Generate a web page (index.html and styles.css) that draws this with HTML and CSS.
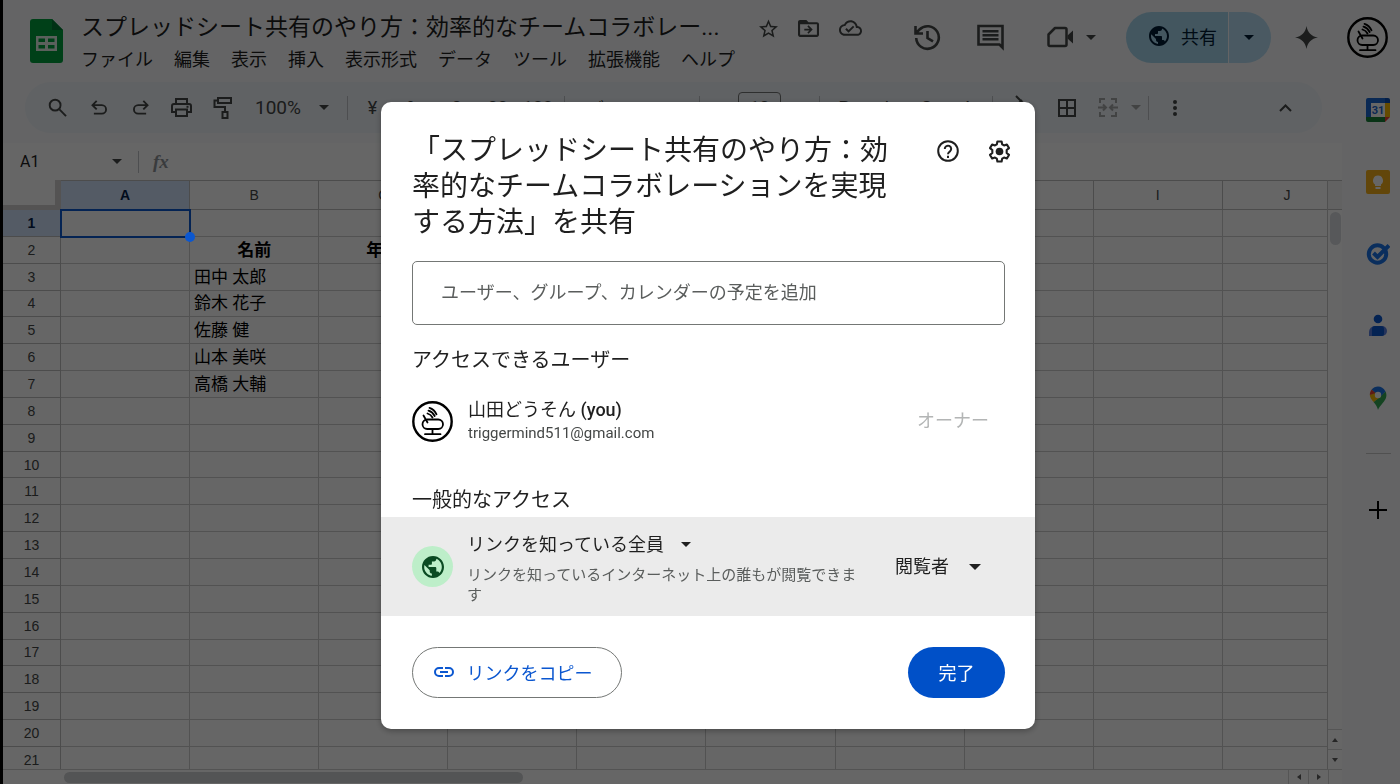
FILE: index.html
```html
<!DOCTYPE html>
<html lang="ja">
<head>
<meta charset="utf-8">
<title>スプレッドシート共有のやり方</title>
<link rel="stylesheet" href="styles.css">
</head>
<body>
<svg width="0" height="0" class="defs" aria-hidden="true">
  <symbol id="globe" viewBox="2 2 20 20"><path fill="currentColor" d="M12 2C6.48 2 2 6.48 2 12s4.48 10 10 10 10-4.480 10-10S17.520 2 12 2zm-1 17.930c-3.950-.490-7-3.850-7-7.930 0-.620.080-1.210.210-1.790L9 15v1c0 1.100.900 2 2 2v1.930zm6.900-2.540c-.260-.810-1-1.390-1.900-1.390h-1v-3c0-.550-.450-1-1-1H8v-2h2c.550 0 1-.450 1-1V7h2c1.100 0 2-.900 2-2v-.410c2.930 1.190 5 4.060 5 7.410 0 2.080-.800 3.970-2.100 5.390z"/></symbol>
  <symbol id="down" viewBox="0 0 10 5"><path fill="currentColor" d="M0 0h10L5 5z"/></symbol>
  <symbol id="mic" viewBox="0 0 41 41"><circle cx="20.500" cy="20.500" r="19.200" fill="#fff" stroke="#000" stroke-width="2.400"/><g fill="none" stroke="#000" stroke-width="1.800" stroke-linecap="round"><rect x="10.500" y="18.500" width="20.500" height="9.500" rx="4.750"/><path d="M20.500 28v5M13 33.200h15.500M11.500 14.500l4 7M15.500 12.500q3.500 1 5 4M17.500 6.800q4.800 1.500 7 6.500M16.500 9.600q4 1.200 6.200 5.400"/></g></symbol>
</svg>

<div class="app">
  <header class="top">
    <svg class="logo" viewBox="0 0 33 44"><path fill="#00a13d" d="M3 0h19l11 11v30a3 3 0 0 1-3 3H3a3 3 0 0 1-3-3V3a3 3 0 0 1 3-3z"/><path fill="#007a33" d="M22 0l11 11H22z"/><path fill="#e4f0e6" fill-rule="evenodd" d="M6 17h21v15H6zM8.500 19.500v3.500H15v-3.500zm9.500 0v3.500h6.500v-3.500zM8.500 26v3.500H15V26zM18 26v3.500h6.500V26z"/></svg>
    <div class="doc">
      <div class="doc-name">
        <h1>スプレッドシート共有のやり方：効率的なチームコラボレー...</h1>
        <button aria-label="スター"><svg width="19" height="19" viewBox="2 2 20 19"><path fill="currentColor" d="M22 9.240l-7.190-.620L12 2 9.190 8.630 2 9.240l5.460 4.730L5.820 21 12 17.270 18.180 21l-1.630-7.030L22 9.240zM12 15.400l-3.760 2.270 1-4.280-3.320-2.880 4.380-.380L12 6.100l1.710 4.040 4.380.380-3.320 2.880 1 4.280L12 15.400z"/></svg></button>
        <button aria-label="移動"><svg width="21" height="17" viewBox="2 4 20 16"><path fill="currentColor" d="M20 6h-8l-2-2H4C2.900 4 2 4.900 2 6v12c0 1.100.900 2 2 2h16c1.100 0 2-.900 2-2V8c0-1.100-.900-2-2-2zm0 12H4V8h16v10zm-8-1l4-4-4-4-1.100 1.100 2.100 2.100H8v1.600h5l-2.100 2.100z"/></svg></button>
        <button aria-label="保存済み"><svg width="23" height="16" viewBox="0 4 24 16"><path fill="currentColor" d="M19.350 10.040C18.670 6.590 15.640 4 12 4 9.110 4 6.600 5.640 5.350 8.040 2.340 8.360 0 10.910 0 14c0 3.310 2.690 6 6 6h13c2.760 0 5-2.240 5-5 0-2.640-2.050-4.780-4.650-4.960zM19 18H6c-2.210 0-4-1.790-4-4 0-2.050 1.530-3.760 3.560-3.970l1.070-.110.500-.950C8.080 7.140 9.940 6 12 6c2.620 0 4.880 1.860 5.390 4.430l.300 1.500 1.530.110c1.560.100 2.780 1.410 2.780 2.960 0 1.650-1.350 3-3 3zm-9-3.820l-2.090-2.090L6.500 13.500 10 17l6.010-6.010-1.410-1.410z"/></svg></button>
      </div>
      <nav class="menus">
        <button>ファイル</button><button>編集</button><button>表示</button><button>挿入</button><button>表示形式</button><button>データ</button><button>ツール</button><button>拡張機能</button><button>ヘルプ</button>
      </nav>
    </div>
    <div class="actions">
      <button aria-label="変更履歴"><svg width="27" height="27" viewBox="0 0 27 27" fill="none" stroke="currentColor" stroke-width="2.600"><path d="M2.200 14a11.300 11.300 0 1 0 3.300-8.500L2 9M1.500 2v7.500H9M13.500 7v7l5.500 3.300"/></svg></button>
      <button aria-label="コメント"><svg width="27" height="27" viewBox="0 0 27 27" fill="none" stroke="currentColor" stroke-width="2.600"><path d="M1.500 2h24v21.500l-3-3h-21zM5.500 7.200h16M5.500 11.200h16M5.500 15.200h16"/></svg></button>
      <button class="meet" aria-label="ビデオ通話"><svg width="27" height="22" viewBox="0 0 27 22"><path fill="none" stroke="currentColor" stroke-width="2.500" stroke-linejoin="round" d="M8 2h10a1.500 1.500 0 0 1 1.500 1.500v15A1.500 1.500 0 0 1 18 20H3a1.500 1.500 0 0 1-1.500-1.500V8.500z"/><path fill="currentColor" d="M20.500 9.500L26 4.500v13l-5.500-5z"/></svg><svg width="10" height="5"><use href="#down"/></svg></button>
      <div class="share">
        <button class="share-main"><svg width="20" height="20"><use href="#globe"/></svg>共有</button>
        <button class="share-more" aria-label="共有オプション"><svg width="10" height="5"><use href="#down"/></svg></button>
      </div>
      <button aria-label="Gemini"><svg width="23" height="23" viewBox="0 0 22 22"><path fill="currentColor" d="M11 0c1.200 6.500 4.500 9.800 11 11-6.500 1.200-9.800 4.500-11 11-1.200-6.500-4.500-9.800-11-11 6.500-1.200 9.800-4.500 11-11z"/></svg></button>
      <button class="account" aria-label="アカウント"><svg width="41" height="41"><use href="#mic"/></svg></button>
    </div>
  </header>

  <div class="body">
    <main>
      <div class="toolbar">
        <button class="tool wide" aria-label="検索"><svg width="19" height="19" viewBox="0 0 20 20" fill="none" stroke="currentColor" stroke-width="2"><circle cx="7.500" cy="7.500" r="5.700"/><path d="M12 12l7 7"/></svg></button>
        <button class="tool" aria-label="元に戻す"><svg width="17" height="15" viewBox="0 0 18 16" fill="none" stroke="currentColor" stroke-width="2"><path d="M3 14.500h8.500a4.500 4.500 0 0 0 0-9H2M6 1L1.500 5.500 6 10"/></svg></button>
        <button class="tool" aria-label="やり直し"><svg width="17" height="15" viewBox="0 0 18 16" fill="none" stroke="currentColor" stroke-width="2"><path d="M15 14.500H6.500a4.500 4.500 0 0 1 0-9H16M12 1l4.500 4.500L12 10"/></svg></button>
        <button class="tool" aria-label="印刷"><svg width="21" height="19" viewBox="0 0 21 19" fill="none" stroke="currentColor" stroke-width="2"><path d="M5 6V1h11v5M5 14H1V8a2 2 0 0 1 2-2h15a2 2 0 0 1 2 2v6h-4M5 11.500h11V18H5z"/><path d="M15.500 8.800h2"/></svg></button>
        <button class="tool" aria-label="書式をコピー"><svg width="19" height="22" viewBox="0 0 19 22" fill="none" stroke="currentColor" stroke-width="2"><path d="M5 1h13v5H5zM5 3.500H1.500v6.500H12v5M9.500 15h5v6h-5z"/></svg></button>
        <button class="zoomer">100%<svg width="10" height="5"><use href="#down"/></svg></button>
        <i class="sep"></i>
        <button class="tool">¥</button><button class="tool">%</button><button class="tool">.0</button><button class="tool">.00</button><button class="tool wide">123</button>
        <i class="sep"></i>
        <button class="fontpick">デフォ...</button>
        <i class="sep"></i>
        <button class="step">−</button><input class="fontsize" aria-label="フォントサイズ" value="10"><button class="step">+</button>
        <i class="sep"></i>
        <button class="tool"><b>B</b></button><button class="tool"><em>I</em></button><button class="tool"><s>S</s></button><button class="tool">A</button>
        <i class="sep"></i>
        <button class="tool fill" aria-label="塗りつぶし"><svg width="22" height="26" viewBox="0 0 22 26" fill="none" stroke="currentColor" stroke-width="2"><path d="M5 1l12 12-6 6-7-7 7-7"/></svg></button>
        <button class="tool" aria-label="枠線"><svg width="18" height="18" viewBox="0 0 18 18" fill="none" stroke="currentColor" stroke-width="2"><path d="M1 1h16v16H1zM9 1v16M1 9h16"/></svg></button>
        <button class="tool off" aria-label="結合"><svg width="20" height="19" viewBox="0 0 20 19" fill="none" stroke="currentColor" stroke-width="2"><path d="M7 1H2v4M13 1h5v4M7 18H2v-4M13 18h5v-4M0 9.500h7M20 9.500h-7M5 6.500l3 3-3 3M15 6.500l-3 3 3 3"/></svg></button>
        <button class="mini off" aria-label="結合の種類"><svg width="10" height="5"><use href="#down"/></svg></button>
        <i class="sep"></i>
        <button class="tool wide" aria-label="その他"><svg width="4" height="16" viewBox="0 0 4 16" fill="currentColor"><circle cx="2" cy="2" r="2"/><circle cx="2" cy="8" r="2"/><circle cx="2" cy="14" r="2"/></svg></button>
        <button class="tool last" aria-label="メニューを隠す"><svg width="13" height="8" viewBox="0 0 13 8" fill="none" stroke="currentColor" stroke-width="2"><path d="M1 7l5.500-5.500L12 7"/></svg></button>
      </div>

      <div class="formula">
        <input class="namebox" aria-label="名前ボックス" value="A1">
        <svg width="10" height="5"><use href="#down"/></svg>
        <i class="sep"></i>
        <span class="fx">fx</span>
      </div>

      <div class="sheet">
        <div class="cells">
          <table>
            <colgroup><col class="numcol"><col span="10"></colgroup>
            <thead><tr><td class="corner"></td><th class="on">A</th><th>B</th><th>C</th><th>D</th><th>E</th><th>F</th><th>G</th><th>H</th><th>I</th><th>J</th></tr></thead>
            <tbody>
              <tr><th class="on">1</th><td class="picked"></td><td></td><td></td><td></td><td></td><td></td><td></td><td></td><td></td><td></td></tr>
              <tr><th>2</th><td></td><td class="head">名前</td><td class="head">年齢</td><td></td><td></td><td></td><td></td><td></td><td></td><td></td></tr>
              <tr><th>3</th><td></td><td>田中 太郎</td><td></td><td></td><td></td><td></td><td></td><td></td><td></td><td></td></tr>
              <tr><th>4</th><td></td><td>鈴木 花子</td><td></td><td></td><td></td><td></td><td></td><td></td><td></td><td></td></tr>
              <tr><th>5</th><td></td><td>佐藤 健</td><td></td><td></td><td></td><td></td><td></td><td></td><td></td><td></td></tr>
              <tr><th>6</th><td></td><td>山本 美咲</td><td></td><td></td><td></td><td></td><td></td><td></td><td></td><td></td></tr>
              <tr><th>7</th><td></td><td>高橋 大輔</td><td></td><td></td><td></td><td></td><td></td><td></td><td></td><td></td></tr>
              <tr><th>8</th><td></td><td></td><td></td><td></td><td></td><td></td><td></td><td></td><td></td><td></td></tr>
              <tr><th>9</th><td></td><td></td><td></td><td></td><td></td><td></td><td></td><td></td><td></td><td></td></tr>
              <tr><th>10</th><td></td><td></td><td></td><td></td><td></td><td></td><td></td><td></td><td></td><td></td></tr>
              <tr><th>11</th><td></td><td></td><td></td><td></td><td></td><td></td><td></td><td></td><td></td><td></td></tr>
              <tr><th>12</th><td></td><td></td><td></td><td></td><td></td><td></td><td></td><td></td><td></td><td></td></tr>
              <tr><th>13</th><td></td><td></td><td></td><td></td><td></td><td></td><td></td><td></td><td></td><td></td></tr>
              <tr><th>14</th><td></td><td></td><td></td><td></td><td></td><td></td><td></td><td></td><td></td><td></td></tr>
              <tr><th>15</th><td></td><td></td><td></td><td></td><td></td><td></td><td></td><td></td><td></td><td></td></tr>
              <tr><th>16</th><td></td><td></td><td></td><td></td><td></td><td></td><td></td><td></td><td></td><td></td></tr>
              <tr><th>17</th><td></td><td></td><td></td><td></td><td></td><td></td><td></td><td></td><td></td><td></td></tr>
              <tr><th>18</th><td></td><td></td><td></td><td></td><td></td><td></td><td></td><td></td><td></td><td></td></tr>
              <tr><th>19</th><td></td><td></td><td></td><td></td><td></td><td></td><td></td><td></td><td></td><td></td></tr>
              <tr><th>20</th><td></td><td></td><td></td><td></td><td></td><td></td><td></td><td></td><td></td><td></td></tr>
              <tr><th>21</th><td></td><td></td><td></td><td></td><td></td><td></td><td></td><td></td><td></td><td></td></tr>
            </tbody>
          </table>
        </div>
        <div class="vbar">
          <div class="vbar-head"></div>
          <div class="vthumb"></div>
          <button class="up" aria-label="上へ"><svg width="6" height="4" viewBox="0 0 6 4"><path fill="currentColor" d="M0 4h6L3 0z"/></svg></button>
          <button aria-label="下へ"><svg width="6" height="4" viewBox="0 0 6 4"><path fill="currentColor" d="M0 0h6L3 4z"/></svg></button>
        </div>
        <div class="hbar">
          <div class="hthumb"></div>
          <button class="left" aria-label="左へ"><svg width="4" height="6" viewBox="0 0 4 6"><path fill="currentColor" d="M4 0v6L0 3z"/></svg></button>
          <button aria-label="右へ"><svg width="4" height="6" viewBox="0 0 4 6"><path fill="currentColor" d="M0 0v6l4-3z"/></svg></button>
        </div>
        <div class="barcorner"></div>
      </div>
    </main>

    <aside>
      <button aria-label="カレンダー"><svg width="24" height="24" viewBox="0 0 24 24"><path fill="#1967d2" d="M2 0h17v5H5v14H0V2a2 2 0 0 1 2-2z"/><path fill="#0b4fb3" d="M19 0h3a2 2 0 0 1 2 2v3h-5z"/><path fill="#fbbc04" d="M19 5h5v14h-5z"/><path fill="#188038" d="M0 19h19v5H2a2 2 0 0 1-2-2z"/><path fill="#ea4335" d="M19 19h5l-5 5z"/><path fill="#fff" d="M5 5h14v14H5z"/><text x="12" y="16" text-anchor="middle" class="day">31</text></svg></button>
      <button aria-label="Keep"><svg width="24" height="24" viewBox="0 0 24 24"><rect width="24" height="24" rx="2" fill="#f5b01b"/><path fill="#fff" d="M12 5.500a5 5 0 0 0-3 9V16h6v-1.500a5 5 0 0 0-3-9zM9.500 17h5v2h-5z"/></svg></button>
      <button aria-label="ToDo"><svg width="24" height="24" viewBox="0 0 24 24" fill="none"><circle cx="11.500" cy="12" r="8.700" stroke="#1a73e8" stroke-width="4"/><path stroke="#1a73e8" stroke-width="4" d="M7.500 11l4 4L23 3.500"/></svg></button>
      <button aria-label="連絡先"><svg width="24" height="24" viewBox="0 0 24 24"><circle cx="12" cy="5" r="4.300" fill="#0b57d0"/><path fill="#5b7fe0" d="M3 22v-4a6 6 0 0 1 6-6h7a5 5 0 0 1 5 5 5 5 0 0 1-5 5z"/><path fill="#0b57d0" d="M6 22v-7a3 3 0 0 1 3-3h6a3 3 0 0 1 3 3v5a2 2 0 0 1-2 2z"/></svg></button>
      <button aria-label="マップ"><svg width="24" height="24" viewBox="0 0 24 24"><path fill="#34a853" d="M12 24c-.600-3-2-5-4.500-8L19.500 5.500c1.800 3.600.800 7-1.500 10-3 4-4.500 5-6 8.500z"/><path fill="#fbbc04" d="M7.500 16C5.500 13.500 4 11.500 3.800 9L9.500 6l4.800 5z"/><path fill="#ea4335" d="M3.800 9c0-2.500.7-4 1.900-5.500L10 7z"/><path fill="#1a73e8" d="M5.700 3.500C9-.900 16.500-1 19.500 5.500L14 11z"/><circle cx="12" cy="9" r="3.200" fill="#fff"/></svg></button>
      <hr>
      <button aria-label="アドオンを取得"><svg width="24" height="24" viewBox="0 0 24 24"><path stroke="#000" stroke-width="2" d="M12 3v18M3 12h18"/></svg></button>
    </aside>
  </div>
</div>

<div class="scrim">
  <section class="dialog" role="dialog" aria-labelledby="share-title">
    <div class="dialog-head">
      <h2 id="share-title">「スプレッドシート共有のやり方：効率的なチームコラボレーションを実現する方法」を共有</h2>
      <button aria-label="ヘルプ"><svg width="22" height="22" viewBox="0 0 22 22" fill="none" stroke="currentColor" stroke-width="2"><circle cx="11" cy="11" r="9.800"/><path d="M7.800 9a3.200 3.200 0 1 1 5.300 2.300c-1.200 1-2.100 1.600-2.100 3M11 15.700v2.200"/></svg></button>
      <button aria-label="設定"><svg width="23" height="23" viewBox="0 0 24 24"><path fill="none" stroke="currentColor" stroke-width="2.200" stroke-linejoin="round" d="M9.800 1.500h4.400l.600 3.100 1.900 1.100 3-1 2.200 3.800-2.400 2v3l2.400 2-2.200 3.800-3-1-1.900 1.100-.600 3.100H9.800l-.600-3.100-1.900-1.100-3 1-2.200-3.800 2.400-2v-3l-2.400-2 2.200-3.800 3 1 1.900-1.100z"/><circle cx="12" cy="12" r="4" fill="currentColor"/></svg></button>
    </div>
    <input class="people" type="text" aria-label="ユーザー、グループ、カレンダーの予定を追加" placeholder="ユーザー、グループ、カレンダーの予定を追加">
    <h3>アクセスできるユーザー</h3>
    <div class="person">
      <svg width="41" height="41"><use href="#mic"/></svg>
      <div class="who"><p class="name">山田どうそん <b>(you)</b></p><p class="mail">triggermind511@gmail.com</p></div>
      <span class="role">オーナー</span>
    </div>
    <h3 class="general">一般的なアクセス</h3>
    <div class="link-access">
      <span class="globe"><svg width="22" height="22"><use href="#globe"/></svg></span>
      <div class="scope">
        <div class="pick"><select aria-label="公開範囲"><option>リンクを知っている全員</option></select><svg width="10" height="5"><use href="#down"/></svg></div>
        <p>リンクを知っているインターネット上の誰もが閲覧できます</p>
      </div>
      <div class="pick viewer"><select aria-label="権限"><option>閲覧者</option></select><svg width="12" height="6"><use href="#down"/></svg></div>
    </div>
    <div class="dialog-foot">
      <button class="copy"><svg width="20" height="10" viewBox="0 0 20 10" fill="none" stroke="currentColor" stroke-width="2"><path d="M9 1H5a4 4 0 0 0 0 8h4M11 1h4a4 4 0 0 1 0 8h-4M6 5h8"/></svg>リンクをコピー</button>
      <button class="done">完了</button>
    </div>
  </section>
</div>
</body>
</html>
```
FILE: styles.css
```css
* { box-sizing: border-box; }

body {
  margin: 0;
  font-family: Roboto, "Noto Sans CJK JP", sans-serif;
  color: #1f1f1f;
  overflow: hidden;
}

button, input, select {
  font: inherit;
  color: inherit;
  border: 0;
  padding: 0;
  background: none;
}

button {
  display: flex;
  align-items: center;
  justify-content: center;
  white-space: nowrap;
}

h1, h2, h3, p { margin: 0; font-weight: 400; }
svg { flex: none; display: block; }
.defs { position: absolute; }

.app {
  display: flex;
  flex-direction: column;
  height: 100vh;
  border-left: 3px solid #000;
  background: #f9fbfd;
}

/* Header */
.top {
  display: flex;
  height: 76px;
  padding: 11px 12px 0 27px;
  color: #444746;
}
.logo { width: 33px; height: 44px; margin-top: 8px; }
.doc { margin-left: 18px; min-width: 0; }
.doc-name { display: flex; align-items: center; gap: 20px; height: 34px; }
.doc-name h1 {
  font-size: 23px;
  line-height: 34px;
  color: #1f1f1f;
  white-space: nowrap;
  margin-right: 19px;
}
.menus { display: flex; gap: 21px; font-size: 18px; line-height: 26px; margin-top: 2px; color: #1f1f1f; }
.actions { display: flex; align-items: center; height: 52px; margin-left: auto; }
.actions > button { margin-right: 36px; }
.actions > .meet { gap: 12px; margin: 0 30px 0 7px; }
.actions > .account { margin-right: 0; }
.share { display: flex; gap: 1px; height: 51px; margin-right: 24px; color: #001d35; font-size: 18px; }
.share-main { width: 102px; gap: 12px; padding: 0 0 2px 12px; border-radius: 26px 0 0 26px; background: #a8d6ee; }
.share-more { width: 42px; padding-right: 2px; border-radius: 0 26px 26px 0; background: #b8def4; }
.actions > .share + button { margin-right: 29px; }

.body { display: flex; flex: 1; min-height: 0; }
main { display: flex; flex-direction: column; flex: 1; min-width: 0; }

/* Toolbar */
.toolbar {
  display: flex;
  align-items: center;
  height: 51px;
  margin: 6px 20px 10px 22px;
  padding: 0 16px 0 10px;
  border-radius: 26px;
  background: #f0f4f9;
  color: #444746;
  font-size: 18px;
}
.tool { flex: none; width: 41px; }
.wide { width: 44px; }
.fill { width: 49px; }
.last { margin-left: auto; }
.off { color: #a5a8a8; }
.mini { width: 16px; }
.sep { flex: none; width: 1px; height: 24px; margin: 0 4px; background: #c0c4c8; }
.zoomer { flex: none; width: 100px; justify-content: space-between; padding: 0 14px 0 12px; font-size: 19px; }
.fontpick { flex: none; width: 126px; justify-content: flex-start; padding-left: 17px; }
.step { flex: none; width: 34px; }
.fontsize { width: 43px; height: 32px; border: 1px solid #747775; border-radius: 4px; text-align: center; }

/* Formula bar */
.formula { display: flex; align-items: center; height: 37px; padding-left: 17px; background: #fff; color: #444746; }
.namebox { width: 92px; font-size: 16px; color: #1f1f1f; }
.formula .sep { height: 22px; margin: 0 14px 0 16px; }
.fx { font: italic 700 19px "Liberation Serif", serif; color: #90959a; }

/* Grid */
.sheet {
  display: grid;
  grid-template: 1fr 15px / 1fr 14px;
  flex: 1;
  min-height: 0;
  background: #fff;
}
.cells { overflow: hidden; min-width: 0; min-height: 0; border-right: 1px solid #c8c8c8; }
table {
  width: 1349px;
  height: calc(100% + 5px);
  table-layout: fixed;
  border-collapse: separate;
  border-spacing: 0;
}
.numcol { width: 58px; }
th, td { padding: 0; border: 0 solid #cdcdcd; border-width: 0 1px 1px 0; line-height: 20px; }
th { font: 14px/20px "Liberation Sans", sans-serif; color: #444746; border-color: #bdbdbd; }
thead tr { height: 30px; }
thead th { border-top-width: 1px; }
th.on { background: #d3e3fd; color: #041e49; font-weight: 700; }
.corner { border: solid #d2cfcf; border-width: 0 6px 5px 0; }
tbody td { padding-left: 4px; font-size: 17px; color: #000; white-space: nowrap; }
tbody td.head { padding: 0; text-align: center; font-weight: 700; }
.picked { position: relative; outline: 2px solid #0b57d0; outline-offset: -1px; }
.picked::after {
  content: "";
  position: absolute;
  z-index: 1;
  right: -6px;
  bottom: -6px;
  width: 10px;
  height: 10px;
  border-radius: 50%;
  background: #0b57d0;
}

.vbar { display: flex; flex-direction: column; color: #606060; }
.vbar-head { height: 30px; border: solid #c0c0c0; border-width: 1px 0; background: #f5f5f5; }
.vthumb { width: 11px; height: 33px; margin: 2px auto 0; border-radius: 6px; background: #dadce0; }
.vbar button { height: 20px; border-top: 1px solid #d4d4d4; }
.vbar .up { margin-top: auto; }
.hbar { display: flex; align-items: center; border-top: 1px solid #d0d0d0; padding-left: 61px; color: #606060; }
.hthumb { flex: 0 1 459px; height: 11px; border-radius: 6px; background: #d0d2d4; }
.hbar button { width: 20px; height: 14px; border-left: 1px solid #d4d4d4; }
.hbar .left { margin-left: auto; }
.barcorner { border: solid #d4d4d4; border-width: 1px 0 0 1px; }

aside { display: flex; flex-direction: column; align-items: center; gap: 48px; width: 58px; padding: 22px 0 0 14px; }
aside hr { width: 25px; height: 1px; margin: -5px 0 -4px; border: 0; background: #c7c7c7; }
.day { font: 700 11px Roboto, sans-serif; fill: #1967d2; }

/* Share dialog */
.scrim {
  position: fixed;
  inset: 0;
  display: flex;
  justify-content: center;
  align-items: flex-start;
  padding: 102px 0 0 16px;
  background: rgba(0, 0, 0, 0.6);
}
.dialog {
  width: 654px;
  max-width: 100%;
  padding-top: 31px;
  border-radius: 10px;
  background: #fff;
  box-shadow: 0 2px 6px rgba(0, 0, 0, 0.3);
  font-size: 18px;
}
.dialog-head { display: flex; align-items: flex-start; padding: 0 24px 0 31px; }
.dialog-head h2 { width: 490px; margin-right: auto; font-size: 28px; line-height: 36px; }
.dialog-head button { height: 36px; margin-left: 29px; }
.people {
  display: block;
  width: calc(100% - 61px);
  height: 64px;
  margin: 20px 30px 21px 31px;
  padding: 0 28px 2px;
  border: 1px solid #747775;
  border-radius: 5px;
}
.people::placeholder { color: #5a5d5c; opacity: 1; }
h3 { padding: 0 31px; font-size: 20px; line-height: 28px; }
.person { display: flex; align-items: center; margin: 24px 46px 42px 31px; }
.who { margin-left: 15px; }
.name { line-height: 24px; }
.name b { font-weight: 500; }
.mail { font-size: 15px; line-height: 22px; color: #444746; }
.role { margin-left: auto; padding-bottom: 4px; color: #b3b5b5; }
.general { margin-bottom: 3px; }
.link-access { display: flex; align-items: center; padding-left: 31px; background: #ebebeb; }
.globe {
  display: grid;
  place-items: center;
  width: 41px;
  height: 41px;
  border-radius: 50%;
  background: #bdeec9;
  color: #0a4a22;
}
.scope { width: 400px; margin-left: 14px; padding: 15px 0 11px; }
.scope p { margin-top: 9px; font-size: 15px; line-height: 20px; color: #5a5d5c; }
.pick { display: flex; align-items: center; gap: 16px; }
.pick select { appearance: none; height: 24px; }
.viewer { gap: 20px; margin-left: 28px; }
.dialog-foot { display: flex; justify-content: space-between; padding: 31px 30px 31px 31px; }
.copy { gap: 13px; width: 210px; height: 51px; padding: 0 8px 2px 0; border: 1px solid #747775; border-radius: 26px; color: #0b57d0; }
.done { width: 97px; height: 51px; padding-bottom: 2px; border-radius: 26px; background: #0050c8; color: #fff; }
```
